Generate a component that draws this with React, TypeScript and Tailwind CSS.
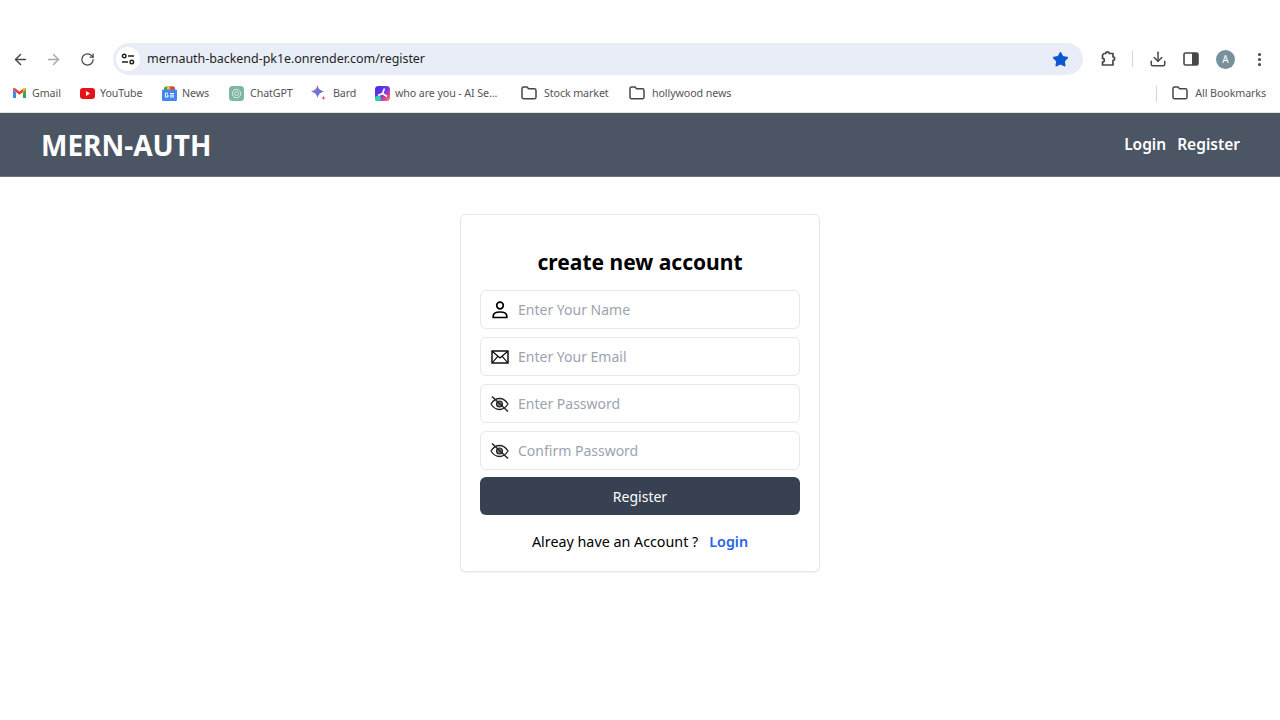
import React from "react";
import { ArrowLeft, ArrowRight, RotateCw, Star, Download, MoreVertical } from "lucide-react";

const PersonIcon = () => (
  <svg width="20" height="20" viewBox="0 0 20 20" fill="none" stroke="#000" strokeWidth="1.700">
    <circle cx="10" cy="5.500" r="3.300" />
    <path d="M3.200 17.500v-1.300c0-2.700 3-4.200 6.800-4.200s6.800 1.500 6.800 4.200v1.300z" />
  </svg>
);

const MailIcon = () => (
  <svg width="18" height="14" viewBox="0 0 18 14" fill="none" stroke="#000" strokeWidth="1.100">
    <rect x="1" y="1" width="16" height="12" strokeWidth="1.400" />
    <path d="M1.500 1.500 9 8l7.500-6.500M1.500 12.500 6.800 6.300M16.500 12.500l-5.300-6.200" />
  </svg>
);

const EyeOffIcon = () => (
  <svg width="19" height="16" viewBox="0 0 19 16" fill="none" stroke="#222" strokeWidth="1.300">
    <path d="M1 8C3.500 4 6.300 2.500 9.500 2.500S15.500 4 18 8c-2.500 4-5.300 5.500-8.500 5.500S3.500 12 1 8Z" />
    <circle cx="9.500" cy="8" r="3" fill="#777" strokeWidth="1.100" />
    <path d="M2 .5 18 15.500" strokeWidth="1.400" />
  </svg>
);

const Folder = () => (
  <svg width="16" height="14" viewBox="0 0 16 14" fill="none" stroke="#474747" strokeWidth="1.500">
    <path d="M1 2.600C1 1.700 1.700 1 2.600 1H6l1.600 1.800h5.800c.9 0 1.600.7 1.600 1.600v6.800c0 .9-.7 1.600-1.600 1.600H2.600c-.9 0-1.600-.7-1.600-1.600V2.600Z" />
  </svg>
);

const Gmail = () => (
  <svg width="13" height="10" viewBox="0 0 13 10">
    <path d="M0 1.200 0 10h3V4.200z" fill="#4285f4" />
    <path d="M13 1.200V10h-3V4.200z" fill="#34a853" />
    <path d="M0 1.200C0 .2 1.200-.3 2 .3L6.500 3.600 11 .3c.8-.6 2-.1 2 .9L10 4.200 6.500 6.800 3 4.200z" fill="#ea4335" />
    <path d="M10 1.800 11 .3c.8-.6 2-.1 2 .9L10 4.200z" fill="#fbbc04" />
  </svg>
);

const YouTube = () => (
  <svg width="15" height="11" viewBox="0 0 15 11">
    <rect width="15" height="11" rx="3" fill="#e8111a" />
    <path d="M6 3v5l4-2.500z" fill="#fff" />
  </svg>
);

const News = () => (
  <svg width="15" height="15" viewBox="0 0 15 15">
    <path d="M2 2.500C2 1.200 3 .5 4 .5h7c1 0 2 .7 2 2V5H2z" fill="#34a853" />
    <path d="M8 .5h3c1 0 2 .7 2 2V5H8z" fill="#ea4335" />
    <path d="M5 .5h3V5H5z" fill="#fbbc04" />
    <rect y="3.500" width="15" height="11.500" rx="1.200" fill="#4285f4" />
    <path d="M6 7.200H3.400v3.800H6V9H4.900" fill="none" stroke="#fff" strokeWidth="1" />
    <path d="M8 7.500h4M8 9.200h4M8 10.900h4" stroke="#fff" strokeWidth="1" />
  </svg>
);

const ChatGPT = () => (
  <svg width="15" height="15" viewBox="0 0 15 15">
    <rect width="15" height="15" rx="3.500" fill="#7fb5a3" />
    <circle cx="7.500" cy="7.500" r="4.200" fill="none" stroke="#d9ebe4" strokeWidth="1" />
    <circle cx="7.500" cy="7.500" r="2" fill="none" stroke="#d9ebe4" strokeWidth="0.900" />
  </svg>
);

const Bard = () => (
  <svg width="16" height="16" viewBox="0 0 16 16">
    <defs>
      <linearGradient id="bardg" x1="0" y1="0" x2="1" y2="1">
        <stop offset="0" stopColor="#d9645f" />
        <stop offset="0.450" stopColor="#7b6fd8" />
        <stop offset="1" stopColor="#3b7be8" />
      </linearGradient>
    </defs>
    <path d="M6.500 0C7 3.500 9 5.500 13 6.500 9 7.500 7 9.500 6.500 13 6 9.500 4 7.500 0 6.500 4 5.500 6 3.500 6.500 0Z" fill="url(#bardg)" />
    <path d="M12.500 10.500C12.700 12 13.500 12.800 15 13 13.500 13.200 12.700 14 12.500 15.500 12.300 14 11.500 13.200 10 13 11.500 12.800 12.300 12 12.500 10.500Z" fill="#e0609c" />
  </svg>
);

const WhoAreYou = () => (
  <svg width="15" height="15" viewBox="0 0 15 15">
    <defs>
      <linearGradient id="whog" x1="0" y1="0" x2="1" y2="1">
        <stop offset="0" stopColor="#3a2fe0" />
        <stop offset="0.500" stopColor="#6a3be8" />
        <stop offset="0.750" stopColor="#e040a0" />
        <stop offset="1" stopColor="#f6a020" />
      </linearGradient>
    </defs>
    <rect width="15" height="15" rx="3.500" fill="url(#whog)" />
    <rect y="10" width="6" height="5" rx="2" fill="#2fd6a0" />
    <path d="M9.500 2.500 7.500 7.500 3 9.500M7.500 7.500l4.500 3" fill="none" stroke="#fff" strokeWidth="1.700" />
  </svg>
);

const Bookmark = ({ icon, label, width, gap = "gap-[5px]" }: { icon: React.ReactNode; label: string; width: string; gap?: string }) => (
  <div className={`flex items-center ${gap} ${width}`}>
    <span className="flex w-[16px] shrink-0 justify-center">{icon}</span>
    <span className="whitespace-nowrap text-[10.700px] tracking-[-0.1px] text-[#555555]">{label}</span>
  </div>
);

const Field = ({ icon, placeholder, type = "text" }: { icon: React.ReactNode; placeholder: string; type?: string }) => (
  <div className="flex h-[39px] items-center rounded-md border border-[#e5e7eb] bg-white">
    <span className="flex w-[37px] shrink-0 justify-center text-black">{icon}</span>
    <input
      type={type}
      placeholder={placeholder}
      className="w-full bg-transparent text-[14px] text-gray-700 outline-none placeholder:text-[#9ca3af]"
    />
  </div>
);

export default function App() {
  return (
    <div className="flex h-[720px] flex-col overflow-hidden bg-white font-['Noto_Sans','Open_Sans',sans-serif]">
      <div className="h-[39px] shrink-0 bg-white" />
      <div className="flex h-[40px] shrink-0 items-center pl-[12px] pr-[12px]">
        <ArrowLeft size={17} strokeWidth={2} className="text-[#474747]" />
        <ArrowRight size={17} strokeWidth={2} className="ml-[16px] text-[#a6a6a6]" />
        <RotateCw size={15} strokeWidth={2} className="ml-[18px] text-[#474747]" />
        <div className="ml-[18px] flex h-[32px] flex-1 items-center rounded-full bg-[#e9edf7] pl-[3px] pr-[14px]">
          <span className="flex h-[24px] w-[24px] items-center justify-center rounded-full bg-white">
            <svg width="14" height="12" viewBox="0 0 14 12" fill="none" stroke="#1f1f1f" strokeWidth="1.400">
              <circle cx="3.200" cy="3" r="1.800" />
              <path d="M7 3h6M1 9h6" />
              <circle cx="10.800" cy="9" r="1.800" />
            </svg>
          </span>
          <span className="ml-[7px] flex-1 text-[12.500px] tracking-[-0.05px] text-[#1f1f1f]">mernauth-backend-pk1e.onrender.com/register</span>
          <Star size={17} fill="#0b57d0" strokeWidth={1.500} className="text-[#0b57d0]" />
        </div>
        <svg className="ml-[15px]" width="18" height="18" viewBox="0 0 18 18" fill="none" stroke="#474747" strokeWidth="1.700" strokeLinejoin="round">
          <path d="M6 3.500h1.800a1.700 1.700 0 0 1 3.400 0H15v3.400a1.700 1.700 0 0 1 0 3.400V15H4.500v-3a1.800 1.800 0 0 0 0-3.600V5z" />
        </svg>
        <div className="ml-[16px] h-[16px] w-[1px] bg-[#c7d7f2]" />
        <Download size={18} strokeWidth={2} className="ml-[16px] text-[#474747]" />
        <svg className="ml-[16px]" width="16" height="14" viewBox="0 0 16 14">
          <rect x="1" y="1" width="14" height="12" rx="1.500" fill="none" stroke="#474747" strokeWidth="1.600" />
          <rect x="9" y="1" width="6" height="12" fill="#474747" />
        </svg>
        <span className="ml-[17px] flex h-[19px] w-[19px] items-center justify-center rounded-full bg-[#78909c] text-[10px] text-white">A</span>
        <MoreVertical size={17} strokeWidth={2.400} className="ml-[16px] text-[#474747]" />
      </div>
      <div className="flex h-[33px] shrink-0 items-center pb-[4px] pl-[11px] pr-[14px]">
        <Bookmark icon={<Gmail />} label="Gmail" width="w-[68px]" />
        <Bookmark icon={<YouTube />} label="YouTube" width="w-[82px]" />
        <Bookmark icon={<News />} label="News" width="w-[67px]" />
        <Bookmark icon={<ChatGPT />} label="ChatGPT" width="w-[83px]" gap="gap-[6px]" />
        <Bookmark icon={<Bard />} label="Bard" width="w-[63px]" gap="gap-[6px]" />
        <Bookmark icon={<WhoAreYou />} label="who are you - AI Se..." width="w-[147px]" />
        <Bookmark icon={<Folder />} label="Stock market" width="w-[108px]" gap="gap-[7px]" />
        <Bookmark icon={<Folder />} label="hollywood news" width="w-[120px]" gap="gap-[7px]" />
        <div className="ml-auto h-[16px] w-[1px] bg-[#c7d7f2]" />
        <div className="ml-[15px] flex items-center gap-[7px]">
          <Folder />
          <span className="text-[10.700px] tracking-[-0.1px] text-[#555555]">All Bookmarks</span>
        </div>
      </div>
      <div className="h-[1px] shrink-0 bg-[#e2e2e2]" />
      <header className="flex h-[64px] shrink-0 items-center justify-between border-b border-[#6b7280] bg-[#4b5563] pl-[41px] pr-10">
        <span className="text-[28px] font-bold text-white">MERN-AUTH</span>
        <nav className="flex gap-[11px] pt-[1px] text-[15.500px] font-semibold text-white">
          <a>Login</a>
          <a>Register</a>
        </nav>
      </header>
      <main className="flex flex-1 justify-center pt-[37px]">
        <div className="flex h-[358px] w-[360px] flex-col rounded-md border border-[#e5e7eb] bg-white px-[19px] pt-[30px] shadow-xs">
          <h1 className="mb-[11px] text-center text-[21px] leading-[34px] font-bold text-black">create new account</h1>
          <div className="flex flex-col gap-[8px]">
            <Field icon={<PersonIcon />} placeholder="Enter Your Name" />
            <Field icon={<MailIcon />} placeholder="Enter Your Email" />
            <Field icon={<EyeOffIcon />} placeholder="Enter Password" type="password" />
            <Field icon={<EyeOffIcon />} placeholder="Confirm Password" type="password" />
            <button className="-mt-[1px] h-[38px] rounded-md bg-[#374151] pt-[1px] text-[14px] text-white">Register</button>
          </div>
          <p className="mt-[15px] text-center text-[14.300px] leading-[24px] text-black">
            Alreay have an Account ?<a className="ml-[11px] font-semibold text-[#2563eb]">Login</a>
          </p>
        </div>
      </main>
    </div>
  );
}
